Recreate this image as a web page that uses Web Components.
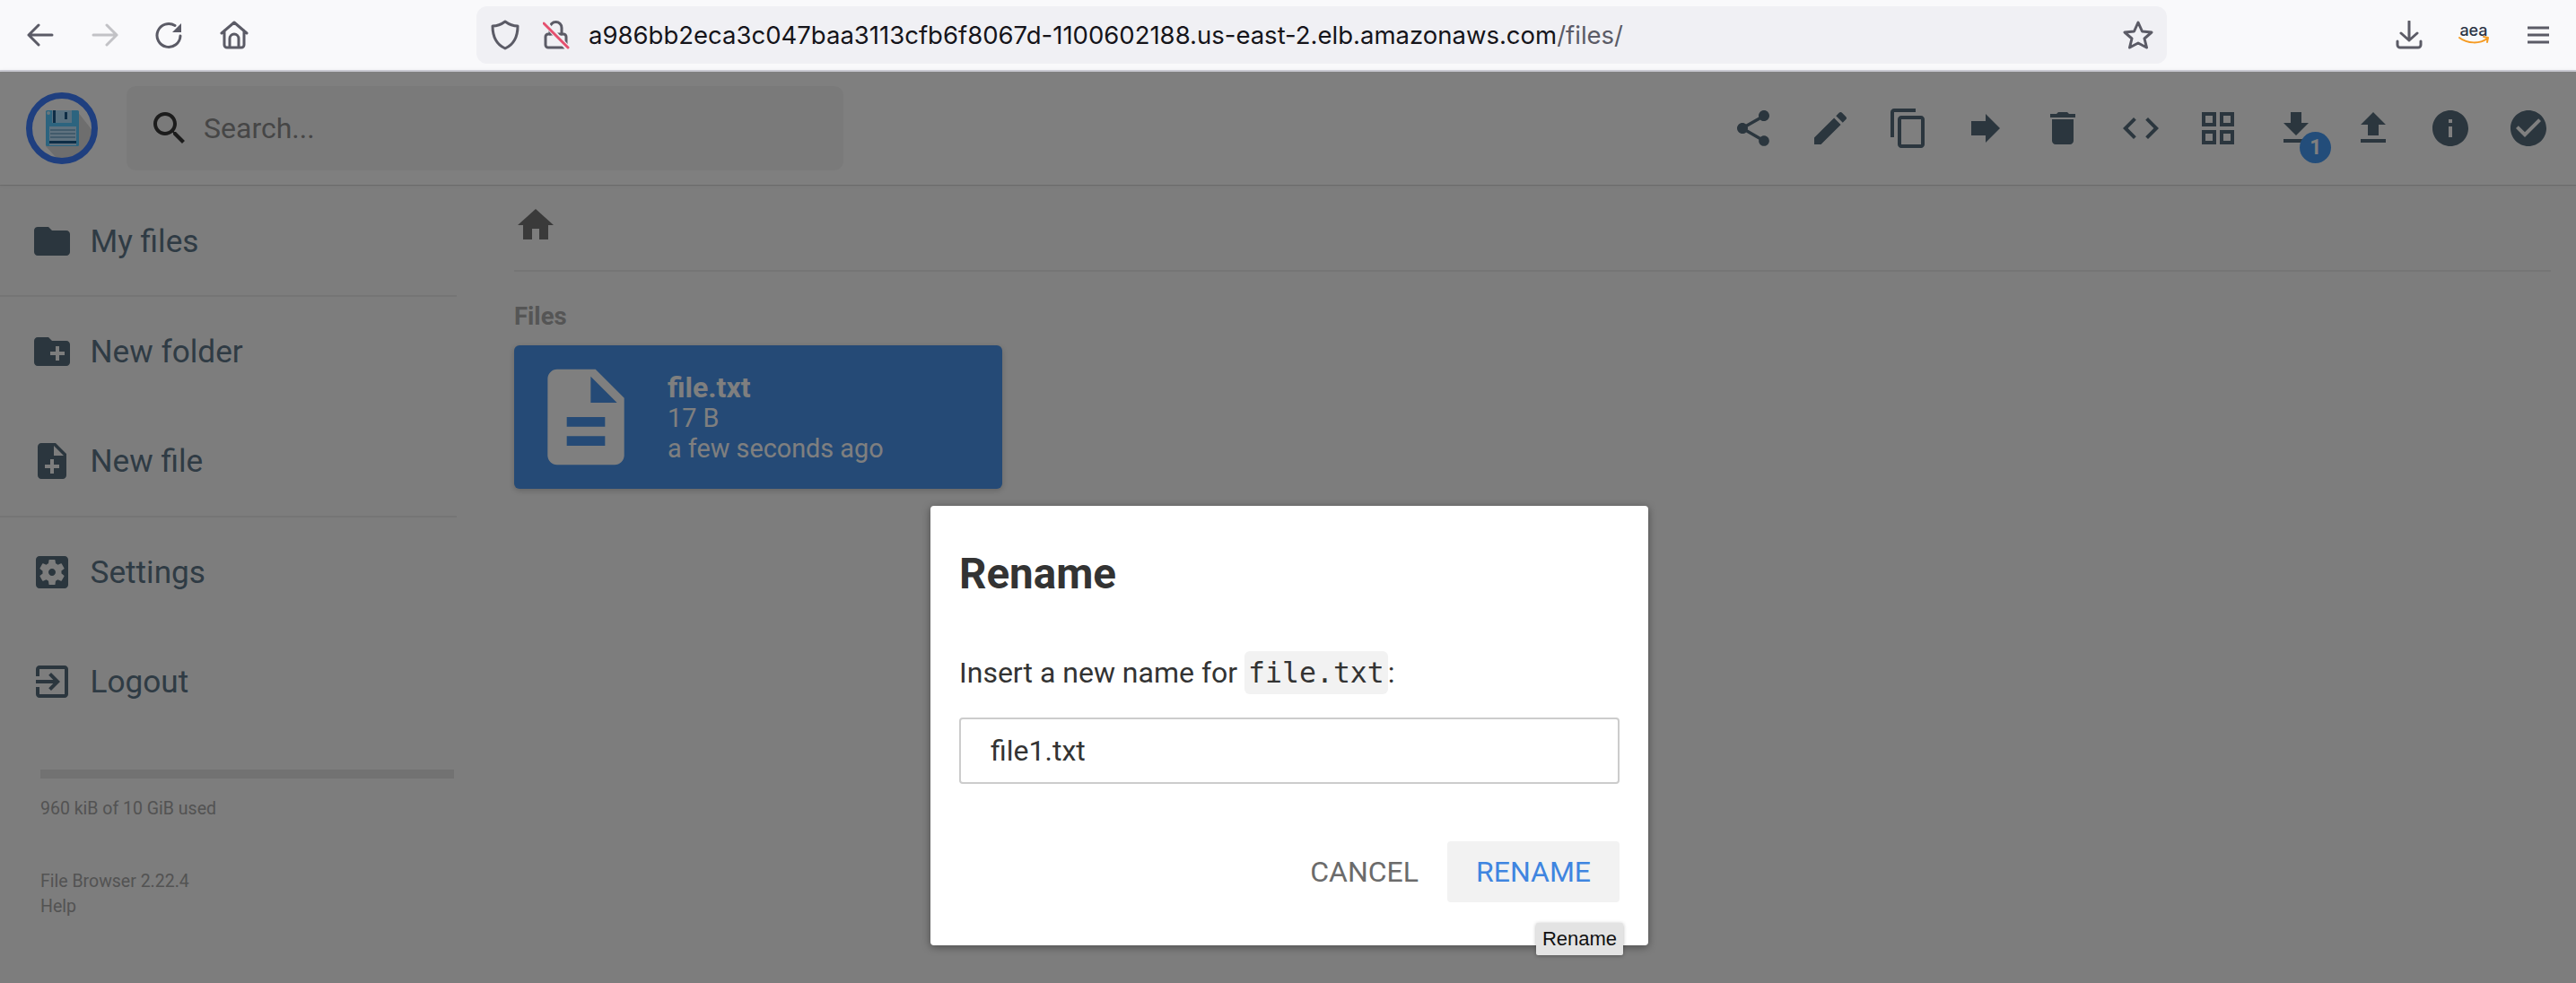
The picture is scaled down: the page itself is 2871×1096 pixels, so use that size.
<!DOCTYPE html>
<html lang="en">
<head>
<meta charset="utf-8">
<title>File Browser</title>
<style>
  html, body { margin: 0; height: 100%; overflow: hidden; background: #fafafa; }
  body { position: relative; font-family: Roboto, "Liberation Sans", sans-serif; }
  .page { display: flex; }
</style>
</head>
<body>
<browser-bar></browser-bar>
<app-header></app-header>
<div class="page">
  <app-sidebar></app-sidebar>
  <file-listing></file-listing>
</div>
<rename-dialog></rename-dialog>

<script>
const ICONS = {
  share: 'M18 16.08c-.76 0-1.44.3-1.96.77L8.91 12.7c.05-.23.09-.46.09-.7s-.04-.47-.09-.7l7.05-4.11c.54.5 1.25.81 2.04.81 1.66 0 3-1.34 3-3s-1.34-3-3-3-3 1.34-3 3c0 .24.04.47.09.7L8.04 9.81C7.5 9.31 6.79 9 6 9c-1.66 0-3 1.34-3 3s1.34 3 3 3c.79 0 1.5-.31 2.04-.81l7.12 4.16c-.05.21-.08.43-.08.65 0 1.61 1.31 2.92 2.92 2.92 1.61 0 2.92-1.31 2.92-2.92s-1.31-2.92-2.92-2.92z',
  edit: 'M3 17.25V21h3.75L17.81 9.94l-3.75-3.75L3 17.25zM20.71 7.04c.39-.39.39-1.02 0-1.41l-2.34-2.34c-.39-.39-1.02-.39-1.41 0l-1.83 1.83 3.75 3.75 1.83-1.83z',
  copy: 'M16 1H4c-1.1 0-2 .9-2 2v14h2V3h12V1zm3 4H8c-1.1 0-2 .9-2 2v14c0 1.1.9 2 2 2h11c1.1 0 2-.9 2-2V7c0-1.1-.9-2-2-2zm0 16H8V7h11v14z',
  forward: 'M12 8V4l8 8-8 8v-4H4V8z',
  trash: 'M6 19c0 1.1.9 2 2 2h8c1.1 0 2-.9 2-2V7H6v12zM19 4h-3.5l-1-1h-5l-1 1H5v2h14V4z',
  code: 'M9.4 16.6L4.8 12l4.6-4.6L8 6l-6 6 6 6 1.4-1.4zm5.2 0l4.6-4.6-4.6-4.6L16 6l6 6-6 6-1.4-1.4z',
  grid: 'M3 3v8h8V3H3zm6 6H5V5h4v4zm-6 4v8h8v-8H3zm6 6H5v-4h4v4zm4-16v8h8V3h-8zm6 6h-4V5h4v4zm-6 4v8h8v-8h-8zm6 6h-4v-4h4v4z',
  download: 'M19 9h-4V3H9v6H5l7 7 7-7zM5 18v2h14v-2H5z',
  upload: 'M9 16h6v-6h4l-7-7-7 7h4zm-4 2h14v2H5z',
  info: 'M12 2C6.48 2 2 6.48 2 12s4.48 10 10 10 10-4.48 10-10S17.52 2 12 2zm1 15h-2v-6h2v6zm0-8h-2V7h2v2z',
  check: 'M12 2C6.48 2 2 6.48 2 12s4.48 10 10 10 10-4.48 10-10S17.52 2 12 2zm-2 15l-5-5 1.41-1.41L10 14.17l7.59-7.59L19 8l-9 9z',
  search: 'M15.5 14h-.79l-.28-.27C15.41 12.59 16 11.11 16 9.5 16 5.91 13.09 3 9.5 3S3 5.91 3 9.5 5.91 16 9.5 16c1.61 0 3.09-.59 4.23-1.57l.27.28v.79l5 4.99L20.49 19l-4.99-5zm-6 0C7.01 14 5 11.99 5 9.5S7.01 5 9.5 5 14 7.01 14 9.5 11.99 14 9.5 14z',
  folder: 'M10 4H4c-1.1 0-1.99.9-1.99 2L2 18c0 1.1.9 2 2 2h16c1.1 0 2-.9 2-2V8c0-1.1-.9-2-2-2h-8l-2-2z',
  newfolder: 'M20 6h-8l-2-2H4c-1.11 0-1.99.89-1.99 2L2 18c0 1.11.89 2 2 2h16c1.11 0 2-.89 2-2V8c0-1.11-.89-2-2-2zm-1 8h-3v3h-2v-3h-3v-2h3V9h2v3h3v2z',
  newfile: 'M14 2H6c-1.1 0-1.99.9-1.99 2L4 20c0 1.1.89 2 1.99 2H18c1.1 0 2-.9 2-2V8l-6-6zm2 14h-3v3h-2v-3H8v-2h3v-3h2v3h3v2zm-3-7V3.5L18.5 9H13z',
  settings: 'M12 10c-1.1 0-2 .9-2 2s.9 2 2 2 2-.9 2-2-.9-2-2-2zm7-7H5c-1.11 0-2 .9-2 2v14c0 1.1.89 2 2 2h14c1.11 0 2-.9 2-2V5c0-1.1-.89-2-2-2zm-1.75 9c0 .23-.02.46-.05.68l1.48 1.16c.13.11.17.3.08.45l-1.4 2.42c-.09.15-.27.21-.43.15l-1.74-.7c-.36.28-.76.51-1.18.69l-.26 1.85c-.03.17-.18.3-.35.3h-2.8c-.17 0-.32-.13-.35-.29l-.26-1.85c-.43-.18-.82-.41-1.18-.69l-1.74.7c-.16.06-.34 0-.43-.15l-1.4-2.42c-.09-.15-.05-.34.08-.45l1.48-1.16c-.03-.23-.05-.46-.05-.69 0-.23.02-.46.05-.68l-1.48-1.16c-.13-.11-.17-.3-.08-.45l1.4-2.42c.09-.15.27-.21.43-.15l1.74.7c.36-.28.76-.51 1.18-.69l.26-1.85c.03-.17.18-.3.35-.3h2.8c.17 0 .32.13.35.29l.26 1.85c.43.18.82.41 1.18.69l1.74-.7c.16-.06.34 0 .43.15l1.4 2.42c.09.15.05.34-.08.45l-1.48 1.16c.03.23.05.46.05.69z',
  logout: 'M10.09 15.59L11.5 17l5-5-5-5-1.41 1.41L12.67 11H3v2h9.67l-2.58 2.59zM19 3H5c-1.11 0-2 .9-2 2v4h2V5h14v14H5v-4H3v4c0 1.1.89 2 2 2h14c1.1 0 2-.9 2-2V5c0-1.1-.9-2-2-2z',
  home: 'M10 20v-6h4v6h5v-8h3L12 3 2 12h3v8z',
  description: 'M14 2H6c-1.1 0-1.99.9-1.99 2L4 20c0 1.1.89 2 1.99 2H18c1.1 0 2-.9 2-2V8l-6-6zm2 16H8v-2h8v2zm0-4H8v-2h8v2zm-3-5V3.5L18.5 9H13z'
};

class MdIcon extends HTMLElement {
  connectedCallback() {
    const size = this.getAttribute('size') || 48;
    this.attachShadow({ mode: 'open' });
    this.shadowRoot.innerHTML = `
      <style>
        :host { display: block; width: ${size}px; height: ${size}px; flex: none; }
        svg { display: block; width: 100%; height: 100%; fill: currentColor; }
      </style>
      <svg viewBox="0 0 24 24"><path d="${ICONS[this.getAttribute('name')]}"/></svg>`;
  }
}
customElements.define('md-icon', MdIcon);

class BrowserBar extends HTMLElement {
  connectedCallback() {
    this.attachShadow({ mode: 'open' });
    this.shadowRoot.innerHTML = `
      <style>
        :host {
          display: flex;
          align-items: center;
          height: 78px;
          padding: 0 6px 0 9px;
          background: #f9f9fb;
          border-bottom: 2px solid #cfcfd8;
          font-family: Inter, "Liberation Sans", sans-serif;
        }
        .btn { width: 72px; height: 78px; display: flex; align-items: center; justify-content: center; flex: none; }
        svg { display: block; fill: none; stroke: #5b5b66; stroke-width: 3; stroke-linecap: round; stroke-linejoin: round; }
        .url {
          width: 1884px;
          height: 64px;
          margin-left: 234px;
          margin-right: auto;
          background: #f0f0f4;
          border-radius: 12px;
          display: flex;
          align-items: center;
          flex: none;
        }
        .url .shield { margin-left: 16px; }
        .url .lock { margin-left: 26px; }
        .addr { margin-left: 21px; font-size: 27.5px; color: #15141a; white-space: nowrap; }
        .addr span { color: #5b5b66; }
        .star { margin-left: auto; margin-right: 15px; }
        .aea { position: relative; width: 34px; height: 30px; }
        .aea b {
          display: block;
          font: 500 18px/20px Inter, "Liberation Sans", sans-serif;
          color: #2b3445;
          text-align: center;
        }
        .aea svg { position: absolute; left: 0; top: 16px; stroke: #f59b23; stroke-width: 2; }
      </style>
      <div class="btn"><svg width="30" height="26" viewBox="0 0 30 26"><path d="M28 13H2M13 2 2 13l11 11"/></svg></div>
      <div class="btn"><svg width="30" height="26" viewBox="0 0 30 26" style="stroke:#c2c2c6"><path d="M2 13h26M17 2l11 11-11 11"/></svg></div>
      <div class="btn"><svg width="32" height="32" viewBox="0 0 32 32"><path d="M28 17a13 13 0 1 1-6-11.500"/><path d="M29 3v10H19z" fill="#5b5b66" stroke="none"/></svg></div>
      <div class="btn"><svg width="32" height="32" viewBox="0 0 32 32"><path d="M2 14 16 2l14 12M5 11v16a3 3 0 0 0 3 3h16a3 3 0 0 0 3-3V11M11 30V20a5 5 0 0 1 10 0v10"/></svg></div>
      <div class="url">
        <svg class="shield" width="32" height="34" viewBox="0 0 32 34"><path d="M16 2c4 3 9 5 14 5 0 11-3 20-14 25C5 27 2 18 2 7c5 0 10-2 14-5z"/></svg>
        <svg class="lock" width="30" height="34" viewBox="0 0 30 34"><path d="M8 16V9a6.500 6.500 0 0 1 13 0v7"/><rect x="3" y="16" width="23" height="15" rx="3"/><path d="M2 3l26 29" stroke="#f0f0f4" stroke-width="6"/><path d="M1 4l27 27" stroke="#e5506f" stroke-width="3"/></svg>
        <div class="addr">a986bb2eca3c047baa3113cfb6f8067d-1100602188.us-east-2.elb.amazonaws.com<span>/files/</span></div>
        <svg class="star" width="34" height="32" viewBox="0 0 34 32"><path d="M17 2l4.500 10 10.500 1-8 7 2.500 10L17 25l-9.500 5 2.500-10-8-7 10.500-1z"/></svg>
      </div>
      <div class="btn"><svg width="30" height="32" viewBox="0 0 30 32"><path d="M15 1v21M6 14l9 8 9-8M2 23v4a3 3 0 0 0 3 3h20a3 3 0 0 0 3-3v-4"/></svg></div>
      <div class="btn">
        <div class="aea"><b>aea</b><svg width="34" height="10" viewBox="0 0 34 10"><path d="M1 2c9 7 23 7 31 1M28 1l5 1-1 5"/></svg></div>
      </div>
      <div class="btn"><svg width="26" height="20" viewBox="0 0 26 20"><path d="M1 2h24M1 10h24M1 18h24" stroke-linecap="butt"/></svg></div>`;
  }
}
customElements.define('browser-bar', BrowserBar);

class AppHeader extends HTMLElement {
  connectedCallback() {
    const actions = ['share', 'edit', 'copy', 'forward', 'trash', 'code', 'grid', 'download', 'upload', 'info', 'check'];
    this.attachShadow({ mode: 'open' });
    this.shadowRoot.innerHTML = `
      <style>
        :host {
          display: flex;
          align-items: center;
          height: 126px;
          padding: 0 10px 0 29px;
          background: #fff;
          box-shadow: 0 0 5px rgba(0, 0, 0, .1), 0 1px 0 rgba(0, 0, 0, .1);
          position: relative;
        }
        .logo { width: 80px; height: 80px; flex: none; display: block; }
        .search {
          width: 799px;
          height: 94px;
          margin-left: 32px;
          display: flex;
          align-items: center;
          padding-left: 24px;
          box-sizing: border-box;
          background: #f5f5f5;
          border-radius: 10px;
          color: #383838;
          flex: none;
        }
        .search span { margin-left: 14px; font-size: 32px; color: #8c8c8c; }
        .actions { margin-left: auto; display: flex; color: #566c7c; }
        .act { width: 86.4px; height: 86px; display: flex; align-items: center; justify-content: center; position: relative; }
        .badge {
          position: absolute;
          left: 48px;
          top: 47px;
          width: 35px;
          height: 35px;
          border-radius: 50%;
          background: #469bf5;
          color: #fff;
          font-size: 23px;
          font-weight: 700;
          display: flex;
          align-items: center;
          justify-content: center;
        }
      </style>
      <svg class="logo" viewBox="0 0 80 80">
        <clipPath id="c"><circle cx="40" cy="40" r="36"/></clipPath>
        <path d="M57 21 80 50 60 80H40L22 60z" fill="#dcdcdc" clip-path="url(#c)"/>
        <circle cx="40" cy="40" r="36.500" fill="none" stroke="#3e7eff" stroke-width="7"/>
        <rect x="22" y="20" width="37" height="40" rx="1.500" fill="#58c8ff"/>
        <rect x="29" y="20" width="22" height="14" fill="#b0e0ff"/>
        <rect x="30" y="20" width="3" height="14" fill="#1d5a8c"/>
        <rect x="43" y="22" width="3" height="8" fill="#1d5a8c"/>
        <circle cx="25" cy="23" r="2" fill="#d0ecf8"/>
        <rect x="26" y="38" width="30" height="21" fill="#c0e4ff"/>
        <path d="M27 42h28M27 46h28M27 50h28" stroke="#4a8ab0" stroke-width="1"/>
        <rect x="26" y="54" width="30" height="3" fill="#1d5a8c"/>
      </svg>
      <div class="search"><md-icon name="search"></md-icon><span>Search...</span></div>
      <div class="actions">
        ${actions.map(a => `<div class="act"><md-icon name="${a}"></md-icon>${a === 'download' ? '<div class="badge">1</div>' : ''}</div>`).join('')}
      </div>`;
  }
}
customElements.define('app-header', AppHeader);

class AppSidebar extends HTMLElement {
  connectedCallback() {
    const row = (icon, label) => `<div class="item"><md-icon name="${icon}"></md-icon><span>${label}</span></div>`;
    this.attachShadow({ mode: 'open' });
    this.shadowRoot.innerHTML = `
      <style>
        :host { display: block; width: 509px; flex: none; padding-top: 1.75px; color: #566c7c; }
        .item { height: 121.5px; display: flex; align-items: center; padding-left: 34px; box-sizing: border-box; }
        .item span { margin-left: 18.5px; font-size: 35.2px; color: #5e7689; }
        .sep { height: 2px; background: #eaeaea; }
        .sep.wide { margin: .5px 0; }
        .usage { margin: 37.75px 3px 0 45px; }
        .bar { height: 10px; background: #e4e4e4; }
        .small { font-size: 19.500px; color: #a6a6a6; line-height: 28px; }
        .used { margin-top: 20px; }
        .credits { margin-top: 53px; }
      </style>
      ${row('folder', 'My files')}
      <div class="sep"></div>
      ${row('newfolder', 'New folder')}
      ${row('newfile', 'New file')}
      <div class="sep wide"></div>
      ${row('settings', 'Settings')}
      ${row('logout', 'Logout')}
      <div class="usage">
        <div class="bar"></div>
        <div class="small used">960 kiB of 10 GiB used</div>
        <div class="small credits">File Browser 2.22.4<br>Help</div>
      </div>`;
  }
}
customElements.define('app-sidebar', AppSidebar);

class FileListing extends HTMLElement {
  connectedCallback() {
    this.attachShadow({ mode: 'open' });
    this.shadowRoot.innerHTML = `
      <style>
        :host { display: block; flex: 1; padding: 0 28px 0 64px; }
        .crumbs { height: 97px; box-sizing: border-box; border-bottom: 2px solid #eaeaea; padding-top: 21px; color: #747474; }
        h2 { margin: 0; padding-top: 33px; font-size: 27.5px; line-height: 33px; font-weight: 700; color: #aaa; height: 49px; box-sizing: content-box; }
        .card {
          width: 544px;
          height: 160px;
          background: #4a95ec;
          border-radius: 6px;
          box-shadow: 0 2px 6px rgba(0, 0, 0, .2);
          display: flex;
          align-items: center;
          color: #fff;
          padding-left: 16px;
          box-sizing: border-box;
        }
        .meta { margin-left: 27px; padding-top: 2px; line-height: 34px; font-size: 28.8px; }
        .meta b { display: block; font-weight: 700; font-size: 32px; }
      </style>
      <div class="crumbs"><md-icon name="home"></md-icon></div>
      <h2>Files</h2>
      <div class="card">
        <md-icon name="description" size="128"></md-icon>
        <div class="meta"><b>file.txt</b>17 B<br>a few seconds ago</div>
      </div>`;
  }
}
customElements.define('file-listing', FileListing);

class RenameDialog extends HTMLElement {
  connectedCallback() {
    this.attachShadow({ mode: 'open' });
    this.shadowRoot.innerHTML = `
      <style>
        :host { position: absolute; inset: 80px 0 0 0; background: rgba(0, 0, 0, .5); display: block; }
        .card {
          position: absolute;
          left: 1037px;
          top: 484px;
          width: 800px;
          height: 490px;
          box-sizing: border-box;
          padding: 0 32px;
          background: #fff;
          border-radius: 4px;
          box-shadow: 0 2px 10px rgba(0, 0, 0, .4);
          color: #333;
        }
        h2 { margin: 0; padding-top: 47px; font-size: 47.5px; line-height: 58px; font-weight: 700; }
        p { margin: 0; padding-top: 59px; font-size: 32px; line-height: 44px; color: #333; }
        code { font-family: "DejaVu Sans Mono", "Liberation Mono", monospace; font-size: 31.5px; background: #f2f2f2; padding: 6px 4px; border-radius: 6px; }
        .input {
          margin-top: 28px;
          height: 74px;
          box-sizing: border-box;
          border: 2px solid #ccc;
          border-radius: 4px;
          display: flex;
          align-items: center;
          padding-left: 33px;
          font-size: 32px;
        }
        .buttons { margin-top: 64px; display: flex; justify-content: flex-end; font-size: 32px; }
        .buttons div { height: 68px; display: flex; align-items: center; padding: 0 32px; border-radius: 4px; }
        .cancel { color: #6b6b6b; }
        .ok { background: #f2f2f2; color: #3f85e0; }
        .tip {
          position: absolute;
          left: 675px;
          top: 465px;
          width: 97px;
          height: 36px;
          box-sizing: border-box;
          background: #e3e3e3;
          box-shadow: 0 1px 4px rgba(0, 0, 0, .3);
          border-radius: 2px;
          display: flex;
          align-items: center;
          justify-content: center;
          font: 22px "Liberation Sans", sans-serif;
          color: #111;
        }
      </style>
      <div class="card">
        <h2>Rename</h2>
        <p>Insert a new name for <code>file.txt</code>:</p>
        <div class="input">file1.txt</div>
        <div class="buttons"><div class="cancel">CANCEL</div><div class="ok">RENAME</div></div>
        <div class="tip">Rename</div>
      </div>`;
  }
}
customElements.define('rename-dialog', RenameDialog);
</script>
</body>
</html>
